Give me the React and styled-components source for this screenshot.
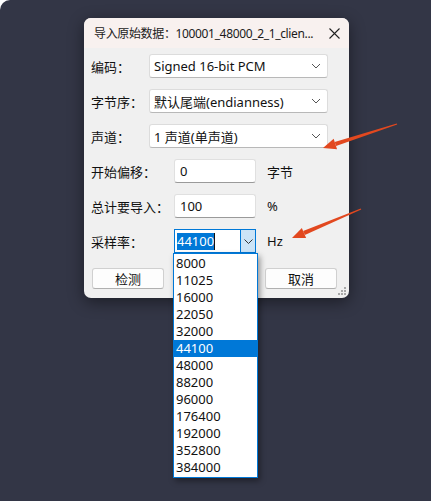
import React from "react";
import styled, { createGlobalStyle } from "styled-components";

const GlobalStyle = createGlobalStyle`
  html, body {
    margin: 0;
    padding: 0;
    background: #ffffff;
  }
  * {
    box-sizing: border-box;
  }
`;

const FONT = `"Noto Sans", "Noto Sans CJK SC", sans-serif`;

const Desk = styled.div`
  position: relative;
  width: 431px;
  height: 501px;
  background: #333646;
  border-radius: 10px 0 0 0;
  padding: 18px 0 0 84px;
  font-family: ${FONT};
  overflow: hidden;
`;

const Dialog = styled.div`
  position: relative;
  width: 265px;
  height: 280px;
  background: #f0f0f0;
  border-radius: 7px;
  box-shadow: 0 4px 16px rgba(0, 0, 0, 0.45);
  display: flex;
  flex-direction: column;
`;

const TitleBar = styled.div`
  height: 30px;
  background: #f8f1ef;
  border-radius: 7px 7px 0 0;
  display: flex;
  align-items: center;
  padding: 0 0 0 10px;
  font-size: 12px;
  color: #1b1b1b;
`;

const Title = styled.div`
  flex: 1;
  white-space: nowrap;
  letter-spacing: -0.35px;
`;

const Close = styled.div`
  width: 30px;
  flex-shrink: 0;
  display: flex;
  justify-content: center;
  align-items: center;
`;

const Body = styled.div`
  flex: 1;
  display: flex;
  flex-direction: column;
  gap: 11px;
  padding: 6px 0 0 7px;
`;

const Row = styled.div`
  display: flex;
  align-items: center;
  height: 24px;
  font-size: 13px;
  color: #111;
`;

const Label = styled.div`
  width: ${(p) => p.$w}px;
  white-space: nowrap;
`;

const Select = styled.div`
  width: 179px;
  height: 24px;
  background: #fff;
  border: 1px solid #dcdcdc;
  border-bottom-color: #b8b8b8;
  border-radius: 3px;
  display: flex;
  align-items: center;
  padding: 0 0 0 4px;
  font-size: 13px;
  color: #111;
`;

const SelectText = styled.div`
  flex: 1;
  white-space: nowrap;
`;

const Chevron = styled.svg`
  width: 10px;
  height: 6px;
  margin-right: 6px;
`;

const Input = styled.div`
  width: 82px;
  height: 24px;
  background: #fff;
  border: 1px solid #e0e0e0;
  border-bottom-color: #9a9a9a;
  border-radius: 3px;
  display: flex;
  align-items: center;
  padding: 0 0 0 5px;
  font-size: 13px;
`;

const Unit = styled.div`
  margin-left: 11px;
`;

const Combo = styled.div`
  width: 82px;
  height: 24px;
  background: #fff;
  border: 1px solid #0078d7;
  display: flex;
  align-items: stretch;
`;

const ComboText = styled.div`
  flex: 1;
  display: flex;
  align-items: center;
  padding-left: 2px;
`;

const Selected = styled.span`
  background: #0078d7;
  color: #fff;
  line-height: 17px;
`;

const Caret = styled.span`
  display: inline-block;
  width: 1px;
  height: 17px;
  background: #111;
`;

const ComboButton = styled.div`
  width: 15px;
  background: #cce4f7;
  border-left: 1px solid #0078d7;
  display: flex;
  align-items: center;
  justify-content: center;
`;

const Buttons = styled.div`
  display: flex;
  justify-content: space-between;
  padding: 0 12px 0 1px;
  margin-top: 4px;
`;

const Button = styled.div`
  width: 72px;
  height: 21px;
  background: #fdfdfd;
  border: 1px solid #d0d0d0;
  border-bottom-color: #b0b0b0;
  border-radius: 3px;
  display: flex;
  align-items: center;
  justify-content: center;
  font-size: 13px;
  color: #111;
`;

const Grip = styled.svg`
  position: absolute;
  right: 2px;
  bottom: 2px;
`;

const List = styled.div`
  position: absolute;
  left: 89px;
  top: 235px;
  width: 85px;
  background: #fff;
  border: 1px solid #0078d7;
  box-shadow: 2px 3px 6px rgba(0, 0, 0, 0.4);
  padding: 1px 0;
  font-size: 13px;
  color: #111;
`;

const Item = styled.div`
  height: 17px;
  line-height: 17px;
  padding-left: 2px;
  background: ${(p) => (p.$active ? "#0078d7" : "transparent")};
  color: ${(p) => (p.$active ? "#fff" : "#111")};
`;

const Arrows = styled.svg`
  position: absolute;
  left: 0;
  top: 0;
  pointer-events: none;
`;

const rates = [
  "8000", "11025", "16000", "22050", "32000", "44100", "48000",
  "88200", "96000", "176400", "192000", "352800", "384000",
];

const Down = () => (
  <Chevron viewBox="0 0 10 6">
    <path d="M1 1 L5 5 L9 1" fill="none" stroke="#555" strokeWidth="1" />
  </Chevron>
);

const DropSelect = ({ children }) => (
  <Select>
    <SelectText>{children}</SelectText>
    <Down />
  </Select>
);

// a red pointer drawn from tail to tip
const Arrow = ({ x1, y1, x2, y2 }) => {
  const a = Math.atan2(y2 - y1, x2 - x1);
  const len = 13;
  const half = 5.5;
  const bx = x2 - len * Math.cos(a);
  const by = y2 - len * Math.sin(a);
  const nx = -Math.sin(a);
  const ny = Math.cos(a);
  const head = `${x2},${y2} ${bx + nx * half},${by + ny * half} ${bx - nx * half},${by - ny * half}`;
  const sx = x1 + 0.6 * nx;
  const sy = y1 + 0.6 * ny;
  const body = `${x1 - 0.6 * nx},${y1 - 0.6 * ny} ${sx},${sy} ${bx + nx * 2.2},${by + ny * 2.2} ${bx - nx * 2.2},${by - ny * 2.2}`;
  return (
    <g fill="#e2481f">
      <polygon points={body} />
      <polygon points={head} />
    </g>
  );
};

export default function App() {
  return (
    <>
      <GlobalStyle />
      <Desk>
        <Dialog>
          <TitleBar>
            <Title>导入原始数据：100001_48000_2_1_clien...</Title>
            <Close>
              <svg width="11" height="11" viewBox="0 0 11 11">
                <path d="M0.5 0.5 L10.5 10.5 M10.5 0.5 L0.5 10.5" stroke="#222" strokeWidth="1.1" />
              </svg>
            </Close>
          </TitleBar>
          <Body>
            <Row>
              <Label $w={58}>编码：</Label>
              <DropSelect>Signed 16-bit PCM</DropSelect>
            </Row>
            <Row>
              <Label $w={58}>字节序：</Label>
              <DropSelect>默认尾端(endianness)</DropSelect>
            </Row>
            <Row>
              <Label $w={58}>声道：</Label>
              <DropSelect>1 声道(单声道)</DropSelect>
            </Row>
            <Row>
              <Label $w={83}>开始偏移：</Label>
              <Input>0</Input>
              <Unit>字节</Unit>
            </Row>
            <Row>
              <Label $w={83}>总计要导入：</Label>
              <Input>100</Input>
              <Unit>%</Unit>
            </Row>
            <Row>
              <Label $w={83}>采样率：</Label>
              <Combo>
                <ComboText>
                  <Selected>44100</Selected>
                  <Caret />
                </ComboText>
                <ComboButton>
                  <svg width="9" height="5" viewBox="0 0 9 5">
                    <path d="M0.5 0.5 L4.5 4.5 L8.5 0.5" fill="none" stroke="#333" strokeWidth="1" />
                  </svg>
                </ComboButton>
              </Combo>
              <Unit>Hz</Unit>
            </Row>
            <Buttons>
              <Button>检测</Button>
              <Button>取消</Button>
            </Buttons>
          </Body>
          <Grip width="10" height="10" viewBox="0 0 10 10">
            {[[8, 2], [5, 5], [8, 5], [2, 8], [5, 8], [8, 8]].map(([x, y]) => (
              <rect key={`${x}-${y}`} x={x - 1} y={y - 1} width="2" height="2" fill="#a8a8a8" />
            ))}
          </Grip>
          <List>
            {rates.map((r) => (
              <Item key={r} $active={r === "44100"}>{r}</Item>
            ))}
          </List>
        </Dialog>
        <Arrows width="431" height="501">
          <Arrow x1={397} y1={124} x2={323} y2={148} />
          <Arrow x1={361} y1={209} x2={292} y2={238} />
        </Arrows>
      </Desk>
    </>
  );
}
